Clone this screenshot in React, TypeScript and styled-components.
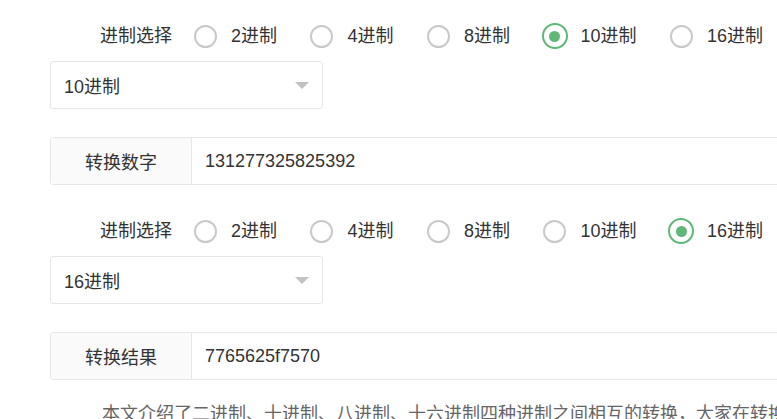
import React, { useState } from "react";
import styled, { createGlobalStyle } from "styled-components";

const GlobalStyle = createGlobalStyle`
  html, body {
    margin: 0;
    padding: 0;
    background: #ffffff;
    overflow: hidden;
  }
  body {
    font-family: "Liberation Sans", "Noto Sans CJK SC", sans-serif;
    font-size: 18px;
    color: #333333;
  }
`;

const Page = styled.div`
  width: 1000px;
  padding: 12px 0 0 50px;
  display: flex;
  flex-direction: column;
  gap: 22px;
`;

const Block = styled.section`
  display: flex;
  flex-direction: column;
`;

const RadioRow = styled.div`
  display: flex;
  align-items: center;
  height: 48px;
`;

const RowLabel = styled.label`
  width: 142px;
  box-sizing: border-box;
  padding-right: 20px;
  text-align: right;
  line-height: 24px;
  color: #333;
`;

const RadioItem = styled.label`
  display: flex;
  align-items: center;
  margin-right: 31.5px;
  cursor: pointer;
  line-height: 24px;
`;

const RadioBox = styled.span`
  width: 26px;
  height: 26px;
  display: flex;
  align-items: center;
  justify-content: center;
  margin-right: 13px;
`;

const RadioCircle = styled.span<{ $checked: boolean }>`
  box-sizing: border-box;
  width: ${(p) => (p.$checked ? 26 : 23)}px;
  height: ${(p) => (p.$checked ? 26 : 23)}px;
  border-radius: 50%;
  border: 2px solid ${(p) => (p.$checked ? "#5fb878" : "#c9c9c9")};
  display: flex;
  align-items: center;
  justify-content: center;
  &::after {
    content: "";
    display: ${(p) => (p.$checked ? "block" : "none")};
    width: 11px;
    height: 11px;
    border-radius: 50%;
    background: #5fb878;
  }
`;

const RadioText = styled.span`
  color: #333;
  white-space: nowrap;
`;

const SelectBox = styled.div`
  margin-top: 1px;
  width: 273px;
  height: 48px;
  box-sizing: border-box;
  border: 1px solid #e6e6e6;
  border-radius: 3px;
  display: flex;
  align-items: center;
  justify-content: space-between;
  padding: 0 13px 0 13px;
  background: #fff;
  cursor: pointer;
`;

const SelectValue = styled.span`
  color: #333;
`;

const Caret = styled.span`
  width: 0;
  height: 0;
  border-left: 7px solid transparent;
  border-right: 7px solid transparent;
  border-top: 7px solid #c2c2c2;
  margin-top: 1px;
`;

const InputGroup = styled.div`
  margin-top: 28px;
  height: 48px;
  box-sizing: border-box;
  border: 1px solid #e6e6e6;
  border-radius: 3px;
  display: flex;
  width: 900px;
`;

const GroupPrefix = styled.div`
  width: 141px;
  flex: none;
  box-sizing: border-box;
  border-right: 1px solid #e6e6e6;
  background: #fafafa;
  display: flex;
  align-items: center;
  justify-content: center;
  color: #333;
`;

const GroupInput = styled.input`
  flex: 1;
  border: none;
  outline: none;
  padding: 0 13px;
  font: inherit;
  font-size: 18px;
  color: #333;
  background: #fff;
`;

const Wrap = styled.div`
  padding-left: 50px;
`;

const Intro = styled.p`
  margin: 19px 0 0 0;
  padding: 0 16px;
  text-indent: 36px;
  line-height: 30px;
  color: #666;
  white-space: nowrap;
`;

const BASES = [2, 4, 8, 10, 16];

type ConverterProps = {
  base: number;
  label: string;
  value: string;
};

function Converter({ base, label, value }: ConverterProps) {
  const [selected, setSelected] = useState(base);
  return (
    <Block>
      <RadioRow>
        <RowLabel>进制选择</RowLabel>
        {BASES.map((b) => (
          <RadioItem key={b} onClick={() => setSelected(b)}>
            <RadioBox>
              <RadioCircle $checked={selected === b} />
            </RadioBox>
            <RadioText>{b}进制</RadioText>
          </RadioItem>
        ))}
      </RadioRow>
      <SelectBox>
        <SelectValue>{selected}进制</SelectValue>
        <Caret />
      </SelectBox>
      <InputGroup>
        <GroupPrefix>{label}</GroupPrefix>
        <GroupInput defaultValue={value} />
      </InputGroup>
    </Block>
  );
}

export default function App() {
  return (
    <>
      <GlobalStyle />
      <Page>
        <Converter base={10} label="转换数字" value="131277325825392" />
        <Converter base={16} label="转换结果" value="7765625f7570" />
      </Page>
      <Wrap>
        <Intro>
          本文介绍了二进制、十进制、八进制、十六进制四种进制之间相互的转换，大家在转换的时候可以直接使用本工具。
        </Intro>
      </Wrap>
    </>
  );
}
